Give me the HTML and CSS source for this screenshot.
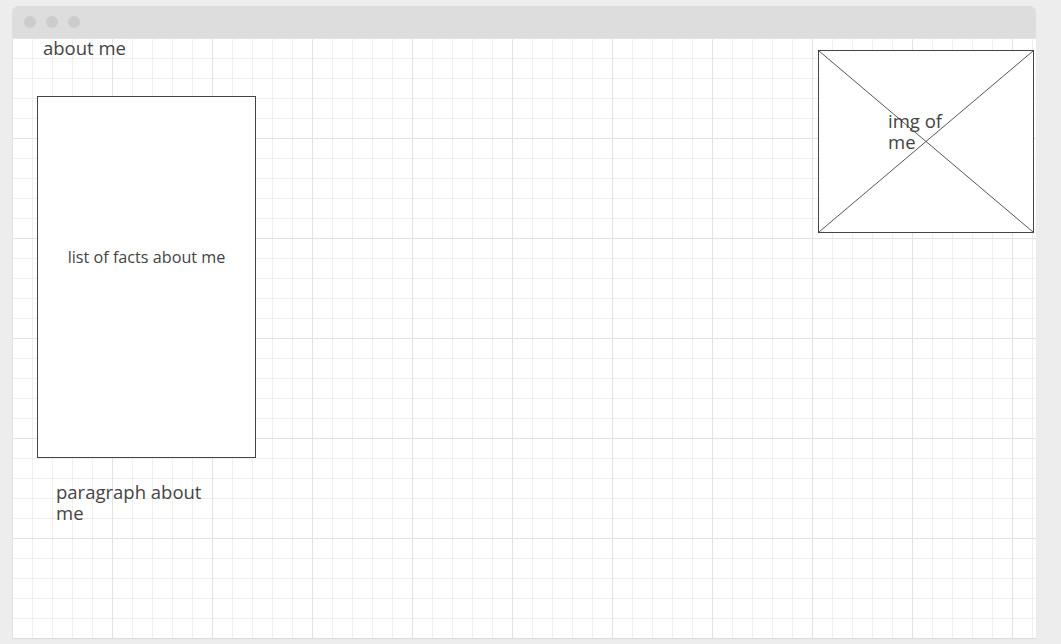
FILE: index.html
```html
<!DOCTYPE html>
<html>
<head>
<meta charset="utf-8">
<link rel="stylesheet" href="styles.css">
</head>
<body>
<div class="window">
  <div class="titlebar">
    <span class="dot"></span><span class="dot"></span><span class="dot"></span>
  </div>
  <div class="canvas">
    <div class="label title">about me</div>
    <div class="box facts"><span>list of facts about me</span></div>
    <div class="label para">paragraph about me</div>
    <div class="box img">
      <svg class="cross" viewBox="0 0 100 100" preserveAspectRatio="none">
        <line x1="0" y1="0" x2="100" y2="100"/>
        <line x1="100" y1="0" x2="0" y2="100"/>
      </svg>
      <div class="label imgtext">img of me</div>
    </div>
  </div>
</div>
</body>
</html>
```

FILE: styles.css
```css
html, body {
  margin: 0;
  padding: 0;
  background: #ededed;
  font-family: "Open Sans", "Noto Sans", sans-serif;
  color: #444;
}
.window {
  position: absolute;
  left: 12px;
  top: 6px;
  width: 1024px;
  height: 632px;
  background: #fff;
  border-radius: 6px 6px 0 0;
  box-shadow: 0 1px 1px rgba(0,0,0,0.08);
  overflow: hidden;
}
.titlebar {
  height: 32px;
  background: #dddddd;
  display: flex;
  align-items: center;
  gap: 10px;
  padding-left: 12px;
}
.dot {
  width: 12px;
  height: 12px;
  border-radius: 50%;
  background: #cccccc;
}
.canvas {
  position: relative;
  height: 600px;
  background-color: #fff;
  background-image:
    linear-gradient(to right, #e2e2e2 1px, transparent 1px),
    linear-gradient(to bottom, #e2e2e2 1px, transparent 1px),
    linear-gradient(to right, #efefef 1px, transparent 1px),
    linear-gradient(to bottom, #efefef 1px, transparent 1px);
  background-size: 100px 100px, 100px 100px, 20px 20px, 20px 20px;
  background-position: 0 0;
}
.label {
  position: absolute;
  font-size: 18.5px;
  line-height: 21px;
  color: #444;
}
.title {
  left: 31px;
  top: -1px;
}
.box {
  position: absolute;
  background: #fff;
  border: 1px solid #444;
  box-sizing: border-box;
}
.facts {
  left: 25px;
  top: 58px;
  width: 219px;
  height: 362px;
  display: flex;
  align-items: center;
  justify-content: center;
  padding-bottom: 40px;
  font-size: 16.2px;
  color: #444;
}
.para {
  left: 44px;
  top: 443px;
  width: 165px;
}
.img {
  left: 806px;
  top: 12px;
  width: 216px;
  height: 183px;
}
.cross {
  position: absolute;
  left: 0;
  top: 0;
  width: 100%;
  height: 100%;
}
.cross line {
  stroke: #555;
  stroke-width: 1;
  vector-effect: non-scaling-stroke;
}
.imgtext {
  left: 69px;
  top: 59px;
  width: 70px;
}
```
